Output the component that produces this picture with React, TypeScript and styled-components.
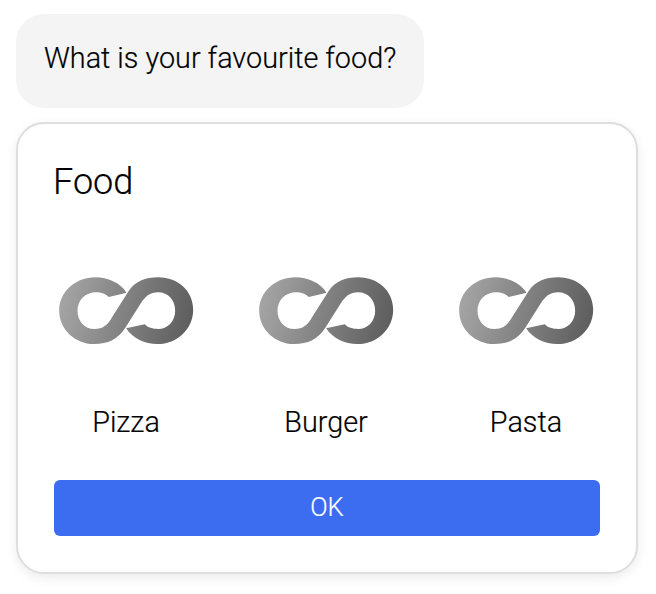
import React from "react";
import styled, { createGlobalStyle } from "styled-components";

const GlobalStyle = createGlobalStyle`
  * { box-sizing: border-box; }
  body {
    margin: 0;
    background: #fff;
    color: #000;
    font-family: Roboto, "Liberation Sans", sans-serif;
    font-weight: 300;
    -webkit-text-stroke: 0.2px currentColor;
  }
`;

const Chat = styled.main`
  display: flex;
  flex-direction: column;
  align-items: flex-start;
  gap: 14px;
  padding: 14px 18px 20px 16px;
`;

const Bubble = styled.div`
  width: 408px;
  height: 94px;
  padding: 24px 0 0 28px;
  border-radius: 28px;
  background: #f4f4f4;
  font-size: 28.8px;
  line-height: 40px;
  white-space: nowrap;
`;

const Card = styled.section`
  display: flex;
  flex-direction: column;
  width: 100%;
  height: 452px;
  padding: 36px 8px;
  border: 2px solid #dedede;
  border-radius: 28px;
  background: #fff;
  box-shadow: 0 4px 12px rgba(0, 0, 0, 0.08);
`;

const Title = styled.h2`
  margin: 0 27px;
  font-size: 36px;
  font-weight: 300;
  line-height: 44px;
`;

const Options = styled.div`
  display: grid;
  grid-template-columns: repeat(3, 200px);
  margin-top: 61px;
`;

const Option = styled.div`
  display: flex;
  flex-direction: column;
  align-items: center;
`;

const OptionIcon = styled.svg`
  display: block;
  width: 155px;
  height: 90px;
`;

const OptionLabel = styled.span`
  margin-top: 47px;
  font-size: 28.8px;
  line-height: 40px;
`;

const Confirm = styled.button`
  height: 56px;
  margin: 38px 28px 0;
  padding: 0 0 2px;
  border: 0;
  border-radius: 6px;
  background: #3c6df0;
  color: #fff;
  font: 300 25.6px/54px Roboto, "Liberation Sans", sans-serif;
`;

function Infinity({ id }: { id: string }) {
  return (
    <OptionIcon viewBox="-3.5 -1 465 270" aria-hidden="true">
      <defs>
        <linearGradient id={id} gradientUnits="userSpaceOnUse" x1="40" y1="95" x2="415" y2="175">
          <stop offset="0" stopColor="#a3a3a3" />
          <stop offset="1" stopColor="#5f5f5f" />
        </linearGradient>
      </defs>
      <path
        fill={`url(#${id})`}
        d="M229 82C210 52 172 36 136 36C75 36 27 80 27 136C27 192 75 236 131 236C175 236 202 222 225 188L270 117C284 94 300 81 324 81C354 81 375 105 375 136C375 168 352 191 324 191C308 191 293 187 284 177L228 189C248 220 284 236 322 236C382 236 429 190 429 133C429 78 384 36 325 36C285 36 255 48 235 78L186 155C172 180 158 191 133 191C103 191 82 167 82 136C82 105 105 81 138 81C155 81 167 87 176 95Z"
      />
    </OptionIcon>
  );
}

const foods = ["Pizza", "Burger", "Pasta"];

export default function App() {
  return (
    <>
      <GlobalStyle />
      <Chat>
        <Bubble>What is your favourite food?</Bubble>
        <Card>
          <Title>Food</Title>
          <Options>
            {foods.map((food) => (
              <Option key={food}>
                <Infinity id={`shade-${food}`} />
                <OptionLabel>{food}</OptionLabel>
              </Option>
            ))}
          </Options>
          <Confirm>OK</Confirm>
        </Card>
      </Chat>
    </>
  );
}
